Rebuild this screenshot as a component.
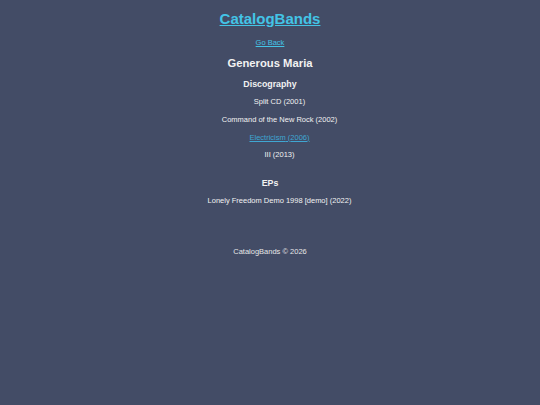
import React from "react";

const albums = [
  { title: "Split CD", year: 2001 },
  { title: "Command of the New Rock", year: 2002 },
  { title: "Electricism", year: 2006, link: true },
  { title: "III", year: 2013 },
];

const eps = [{ title: "Lonely Freedom Demo 1998 [demo]", year: 2022 }];

const App = () => {
  return (
    <div
      className="min-h-[405px] bg-[#434c66] text-[#f2f2f2] text-center"
      style={{ fontFamily: '"Liberation Sans", Arial, sans-serif' }}
    >
      <header className="pt-[10px]">
        <h1 className="text-[15px] font-bold leading-[18px]">
          <a href="#" className="text-[#43c4e6] underline">
            CatalogBands
          </a>
        </h1>
        <div className="mt-[10px] text-[7.5px] leading-[9px]">
          <a href="#" className="text-[#43c4e6] underline">
            Go Back
          </a>
        </div>
      </header>

      <main>
        <h2 className="mt-[9px] text-[11.25px] font-bold leading-[14px]">
          Generous Maria
        </h2>

        <h3 className="mt-[9px] text-[8.8px] font-bold leading-[11px]">
          Discography
        </h3>
        <ul className="mt-[7px] pl-[19px] text-[7.5px] leading-[9px]">
          {albums.map((a) => (
            <li key={a.title} className="mb-[8.75px]">
              {a.link ? (
                <a href="#" className="text-[#3fa6d2] underline">
                  {a.title} ({a.year})
                </a>
              ) : (
                `${a.title} (${a.year})`
              )}
            </li>
          ))}
        </ul>

        <h3 className="mt-[19px] text-[8.8px] font-bold leading-[11px]">EPs</h3>
        <ul className="mt-[7px] pl-[19px] text-[7.5px] leading-[9px]">
          {eps.map((e) => (
            <li key={e.title}>
              {e.title} ({e.year})
            </li>
          ))}
        </ul>
      </main>

      <footer className="mt-[42px] text-[7.5px] leading-[9px] text-[#e6e6e6]">
        CatalogBands © 2026
      </footer>
    </div>
  );
};

export default App;
